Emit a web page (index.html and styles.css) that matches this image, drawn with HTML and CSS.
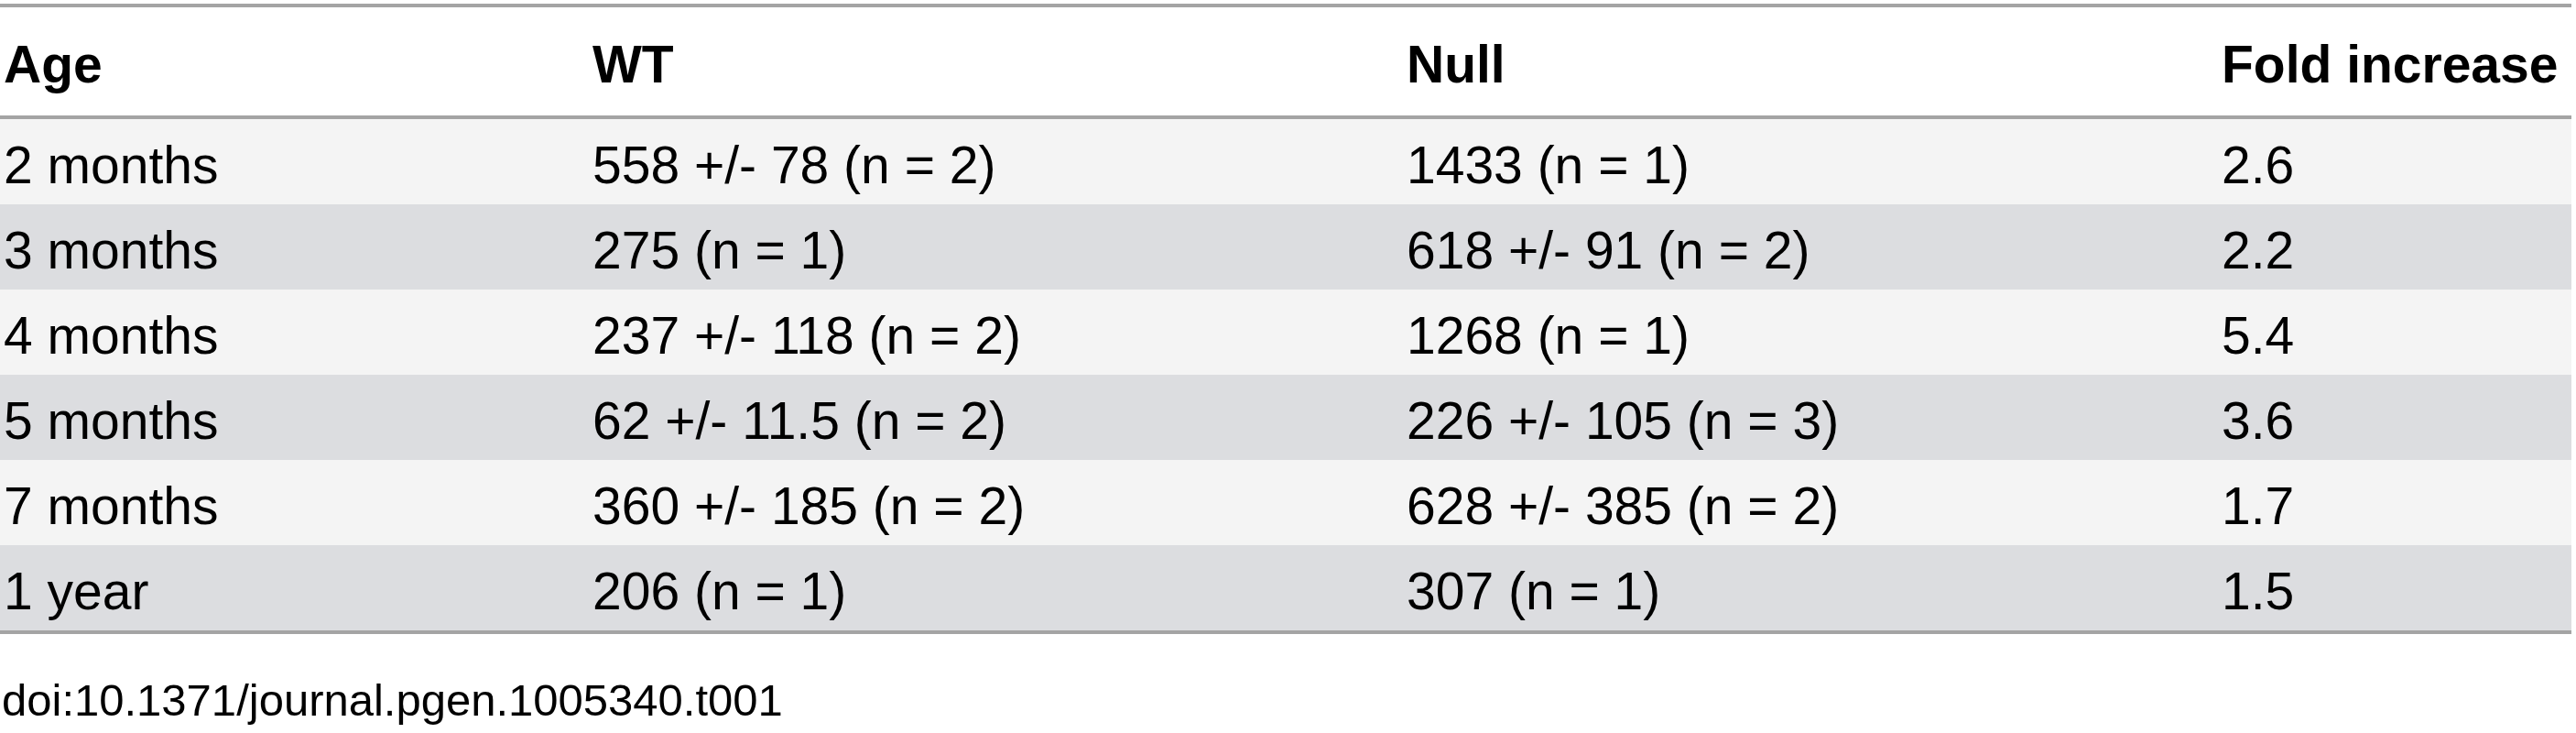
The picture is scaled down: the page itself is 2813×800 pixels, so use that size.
FILE: index.html
```html
<!DOCTYPE html>
<html>
<head>
<meta charset="utf-8">
<link rel="stylesheet" href="styles.css">
</head>
<body>
<div class="wrap">
<table class="data">
  <colgroup>
    <col class="c-age">
    <col class="c-wt">
    <col class="c-null">
    <col class="c-fold">
  </colgroup>
  <thead>
    <tr><th>Age</th><th>WT</th><th>Null</th><th>Fold increase</th></tr>
  </thead>
  <tbody>
    <tr><td>2 months</td><td>558 +/- 78 (n = 2)</td><td>1433 (n = 1)</td><td>2.6</td></tr>
    <tr><td>3 months</td><td>275 (n = 1)</td><td>618 +/- 91 (n = 2)</td><td>2.2</td></tr>
    <tr><td>4 months</td><td>237 +/- 118 (n = 2)</td><td>1268 (n = 1)</td><td>5.4</td></tr>
    <tr><td>5 months</td><td>62 +/- 11.5 (n = 2)</td><td>226 +/- 105 (n = 3)</td><td>3.6</td></tr>
    <tr><td>7 months</td><td>360 +/- 185 (n = 2)</td><td>628 +/- 385 (n = 2)</td><td>1.7</td></tr>
    <tr><td>1 year</td><td>206 (n = 1)</td><td>307 (n = 1)</td><td>1.5</td></tr>
  </tbody>
</table>
<p class="doi">doi:10.1371/journal.pgen.1005340.t001</p>
</div>
</body>
</html>
```
FILE: styles.css
```css
html, body {
  margin: 0;
  padding: 0;
  background: #ffffff;
}
body {
  font-family: "Liberation Sans", Arial, Helvetica, sans-serif;
  color: #000000;
}
.wrap {
  padding-top: 4px;
}
.data {
  width: 2808px;
  table-layout: fixed;
  border-collapse: collapse;
  border-top: 4px solid #a4a4a4;
  border-bottom: 4px solid #a4a4a4;
  font-size: 57px;
  line-height: 64px;
}
.c-age { width: 643px; }
.c-wt { width: 889px; }
.c-null { width: 890px; }
.c-fold { width: 386px; }
.data th {
  text-align: left;
  font-weight: bold;
  padding: 30px 0 24px 4px;
  white-space: nowrap;
  border-bottom: 4px solid #a4a4a4;
}
.data td {
  text-align: left;
  padding: 18px 0 11px 4px;
  white-space: nowrap;
}
.data tbody tr:nth-child(odd) {
  background: #f4f4f4;
}
.data tbody tr:nth-child(even) {
  background: #dcdde0;
}
.doi {
  margin: 44px 0 0 0;
  padding-left: 2px;
  font-size: 49px;
  line-height: 56px;
}
```
